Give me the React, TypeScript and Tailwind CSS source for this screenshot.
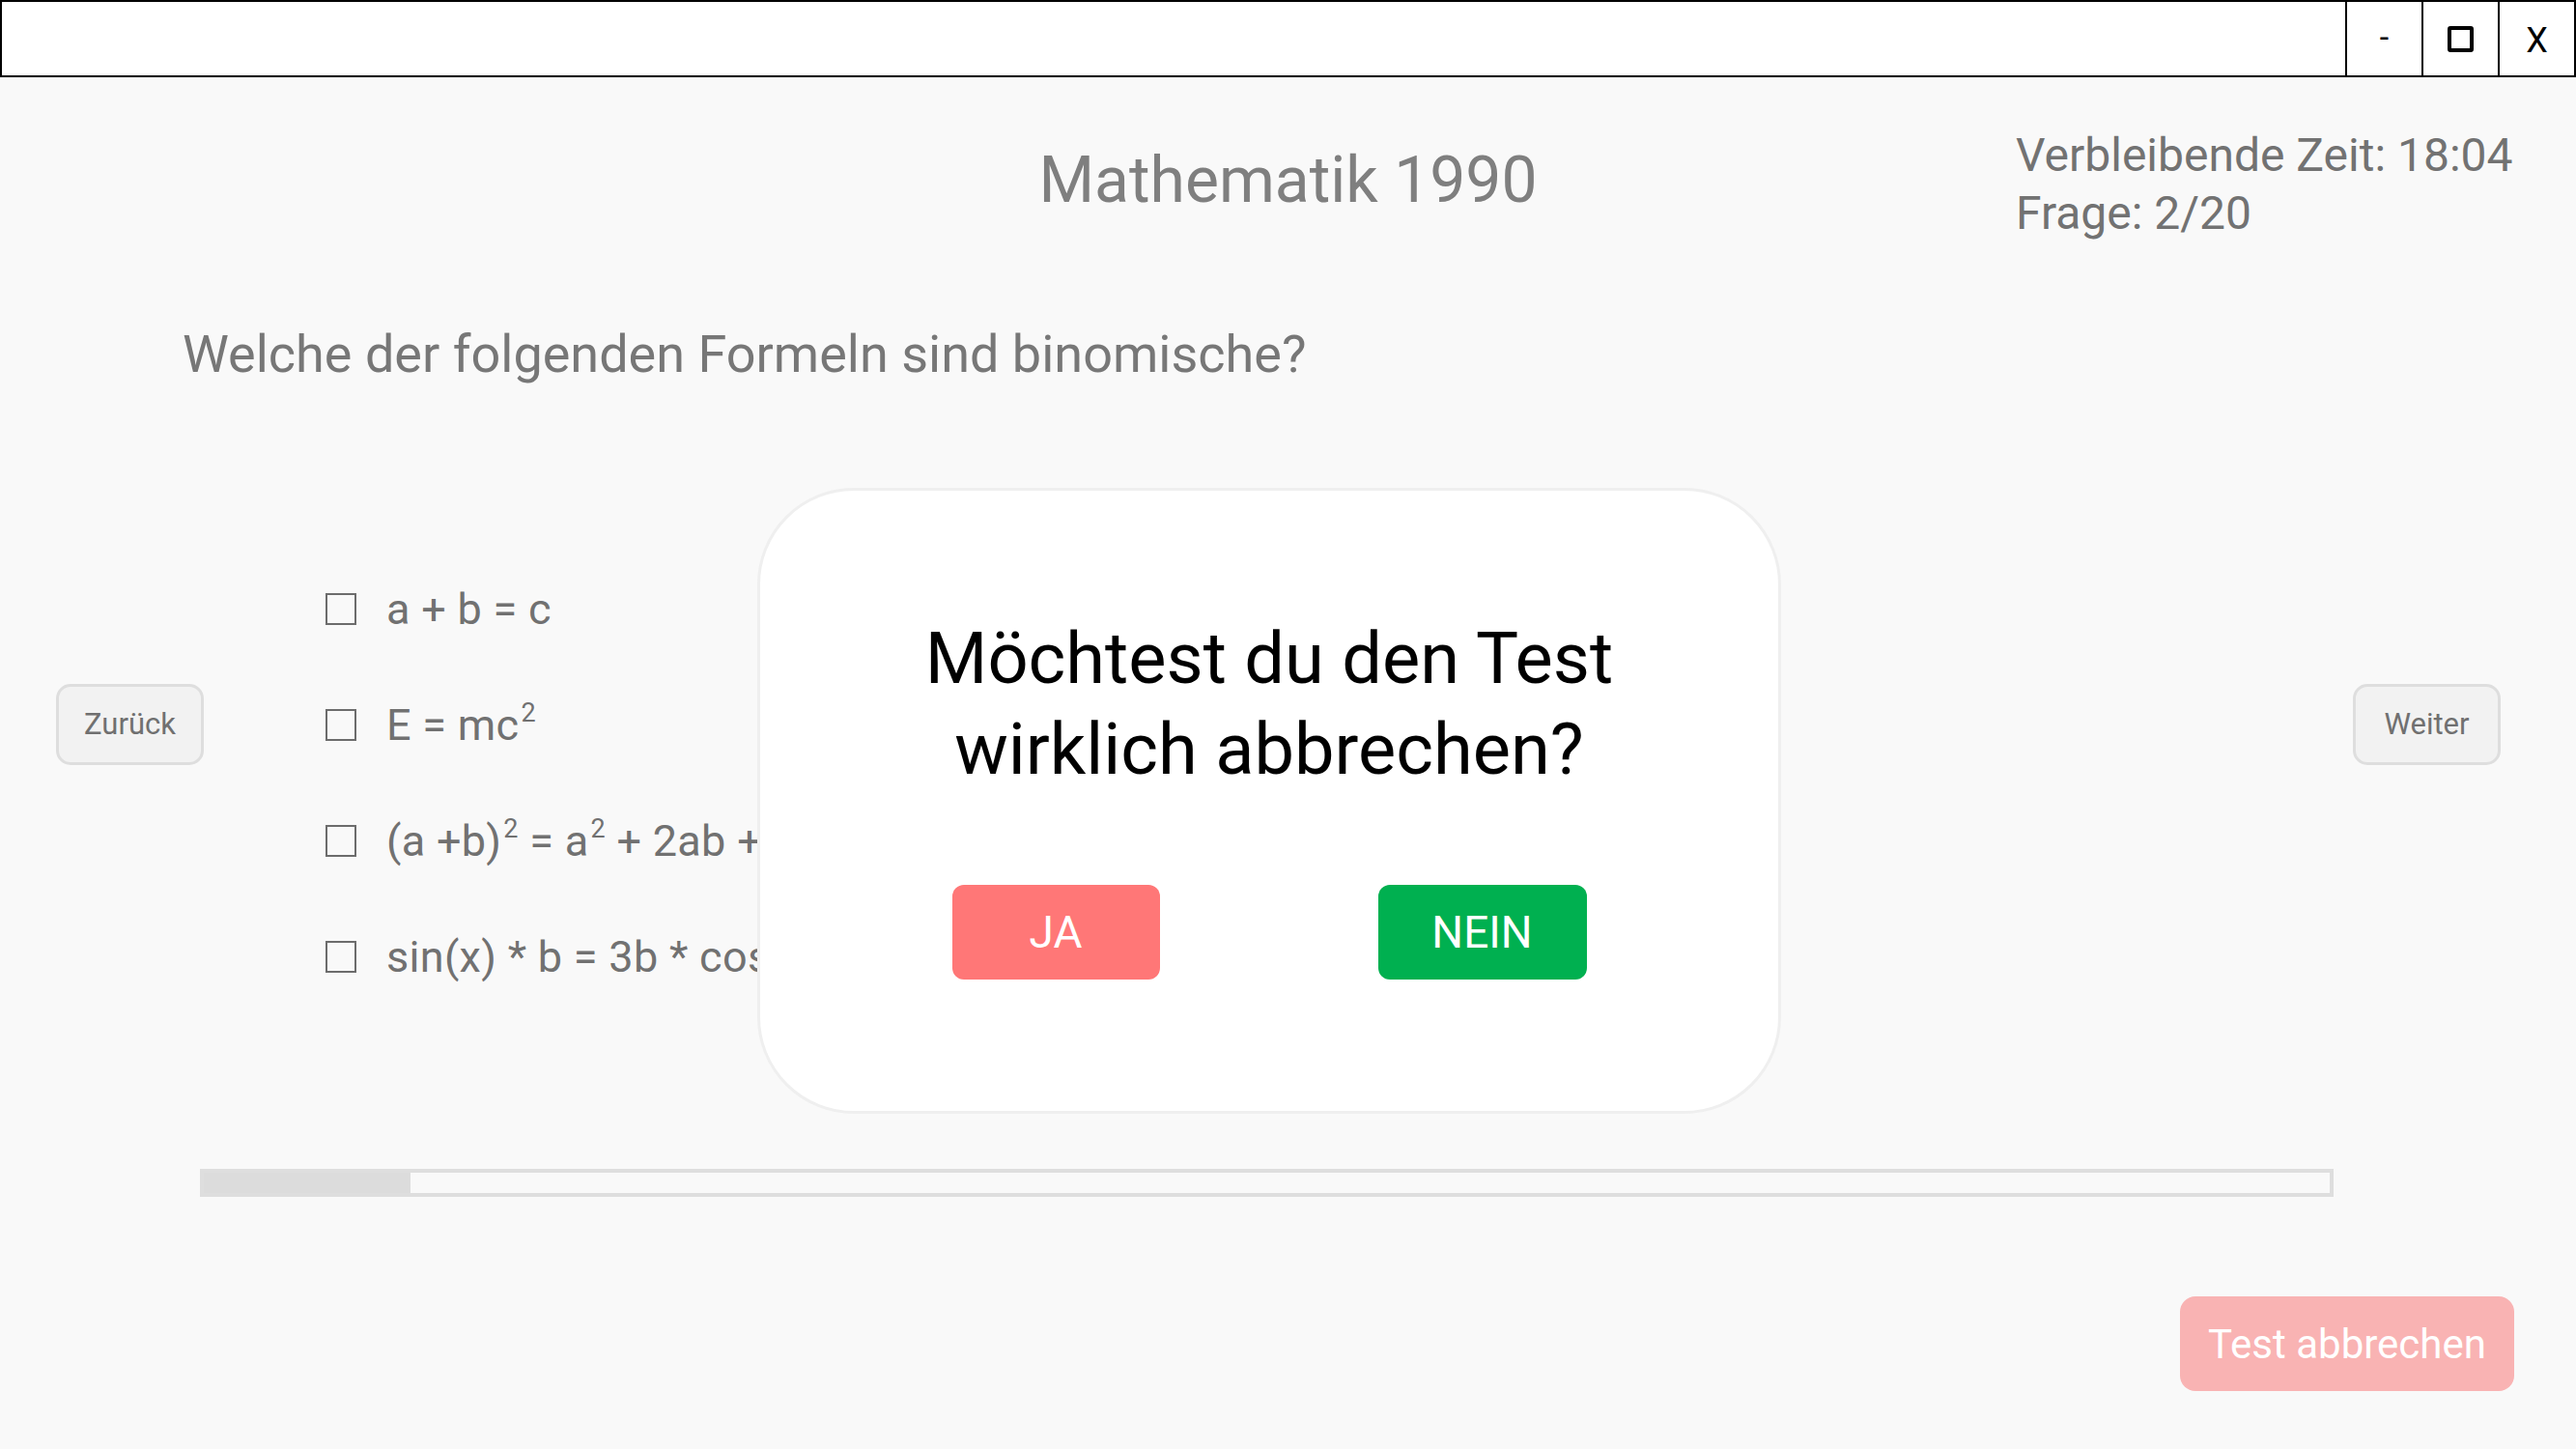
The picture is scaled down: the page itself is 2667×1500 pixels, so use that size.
import React from 'react';

const Sup: React.FC<{ children: React.ReactNode }> = ({ children }) => (
  <sup className="text-[27px] relative -top-[19px] ml-[2px]">{children}</sup>
);

const OPTIONS: React.ReactNode[] = [
  <>a + b = c</>,
  <>E = mc<Sup>2</Sup></>,
  <>(a +b)<Sup>2</Sup> = a<Sup>2</Sup> + 2ab + b<Sup>2</Sup></>,
  <>sin(x) * b = 3b * cos(x)</>,
];

const TitleBar: React.FC = () => (
  <div className="h-[80px] border-2 border-black bg-white flex justify-end">
    <div className="w-[79px] border-l-2 border-black flex items-center justify-center text-[34px] text-black leading-none pb-1">-</div>
    <div className="w-[79px] border-l-2 border-black flex items-center justify-center">
      <div className="w-[27px] h-[27px] border-[4px] border-black rounded-[3px]" />
    </div>
    <div className="w-[79px] border-l-2 border-black flex items-center justify-center text-[36px] text-black leading-none pt-1">X</div>
  </div>
);

const App: React.FC = () => {
  return (
    <div className="relative w-[2667px] h-[1500px] bg-[#f9f9f9] overflow-hidden font-['Roboto','Liberation_Sans',sans-serif]">
      <TitleBar />

      <div className="flex flex-col">
        {/* header */}
        <div className="grid grid-cols-3 items-start pt-[51px]">
          <div />
          <h1 className="mt-[17px] text-center text-[66px] leading-[78px] text-[#7f7f7f] font-normal whitespace-nowrap">Mathematik 1990</h1>
          <div className="pl-[309px] text-[48px] leading-[60px] text-[#727272]">
            <div>Verbleibende Zeit: 18:04</div>
            <div>Frage: 2/20</div>
          </div>
        </div>

        {/* question */}
        <p className="mt-[83px] pl-[189px] text-[54px] leading-[66px] text-[#777777]">Welche der folgenden Formeln sind binomische?</p>

        {/* answers + navigation */}
        <div className="mt-[170px] flex items-start pl-[58px] pr-[78px]">
          <button className="mt-[138px] w-[153px] h-[84px] rounded-[15px] border-[3px] border-[#dedede] bg-[#f2f2f2] text-[31px] text-[#707070]">Zurück</button>
          <div className="ml-[126px] flex flex-col">
            {OPTIONS.map((opt, i) => (
              <div key={i} className="h-[120px] flex items-center gap-[31px]">
                <div className="w-[32px] h-[33px] border-2 border-[#6c6c6c] shrink-0" />
                <span className="text-[45px] leading-none text-[#717171] whitespace-nowrap tracking-[0.3px]">{opt}</span>
              </div>
            ))}
          </div>
          <button className="ml-auto mt-[138px] w-[153px] h-[84px] rounded-[15px] border-[3px] border-[#dedede] bg-[#f2f2f2] text-[31px] text-[#707070]">Weiter</button>
        </div>

        {/* progress */}
        <div className="mt-[160px] ml-[207px] w-[2209px] h-[29px] border-[4px] border-[#dedede] bg-[#f9f9f9] flex">
          <div className="w-[214px] h-full bg-[#dcdcdc]" />
        </div>

        <div className="mt-[103px] flex justify-end pr-[64px]">
          <button className="w-[346px] h-[98px] rounded-[16px] bg-[#f9b3b3] text-white text-[42px]">Test abbrechen</button>
        </div>
      </div>

      {/* confirm dialog */}
      <div className="absolute left-[784px] top-[505px] w-[1060px] h-[648px] rounded-[100px] border-[3px] border-[#efefef] bg-white flex flex-col items-center">
        <p className="mt-[127px] text-center text-[74px] leading-[94px] text-black whitespace-nowrap">
          Möchtest du den Test
          <br />
          wirklich abbrechen?
        </p>
        <div className="mt-[93px] flex gap-[226px]">
          <button className="w-[215px] h-[98px] rounded-[12px] bg-[#ff7777] text-white text-[46px]">JA</button>
          <button className="w-[216px] h-[98px] rounded-[12px] bg-[#00b050] text-white text-[46px]">NEIN</button>
        </div>
      </div>
    </div>
  );
};

export default App;
